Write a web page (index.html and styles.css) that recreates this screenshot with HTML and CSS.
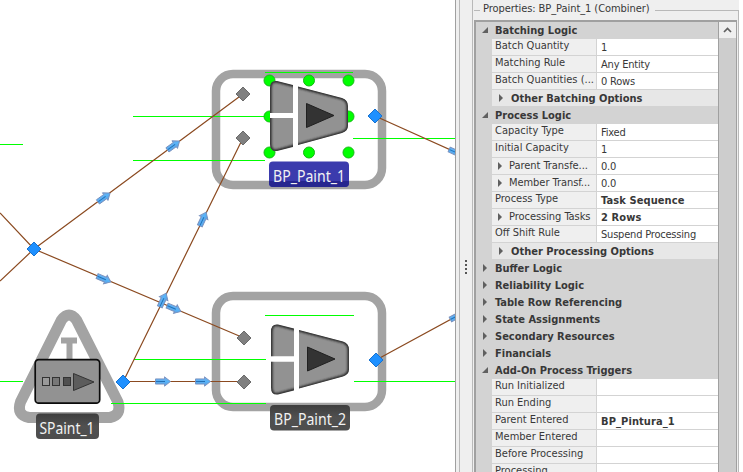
FILE: index.html
```html
<!DOCTYPE html>
<html lang="en">
<head>
<meta charset="utf-8">
<title>Facility model</title>
<link rel="stylesheet" href="styles.css">
</head>
<body>
<main class="app">
<section class="canvas">
<svg width="455" height="472" viewBox="0 0 455 472">
<defs>
<linearGradient id="arrowFill" x1="0" y1="0" x2="0" y2="1"><stop offset="0" stop-color="#78a9e2"/><stop offset=".5" stop-color="#55b4fa"/><stop offset="1" stop-color="#6799d5"/></linearGradient>
<linearGradient id="labelDark" x1="0" y1="0" x2="0" y2="1"><stop offset="0" stop-color="#3d3d3d"/><stop offset=".5" stop-color="#505050"/><stop offset="1" stop-color="#4d4d4d"/></linearGradient>
<filter id="edge" x="-5%" y="-5%" width="110%" height="110%"><feGaussianBlur stdDeviation=".9"/></filter>
<clipPath id="top"><path d="M0 8Q0 0 7 1L23 5V33H0ZM28 6.500L72 18Q78 20 78 26V46Q78 51 72 53L28 65ZM0 38H23V67L7 71Q0 72 0 64Z"/></clipPath>
<g id="arrow"><path d="M-7.500-2.600H1.500V-4.700L7.500 0L1.500 4.700V2.600H-7.500Z" fill="url(#arrowFill)" stroke="#7890bd" stroke-width=".9"/><path d="M-7 0H2" stroke="#246fb5" stroke-width="1"/></g>
<path id="node" d="M0-7L7 0L0 7L-7 0Z"/>
<g id="combiner">
<g clip-path="url(#top)"><path d="M0 8Q0 0 7 1L72 18Q78 20 78 26V46Q78 51 72 53L7 71Q0 72 0 64Z" fill="#929292"/><path d="M0 8Q0 0 7 1L72 18Q78 20 78 26V46Q78 51 72 53L7 71Q0 72 0 64Z" fill="none" stroke="#222" stroke-width="3" filter="url(#edge)"/></g>
<path d="M23 0H28V72H23ZM0 33H23V38H0Z" fill="#fff"/>
<path d="M36.500 23.500L64 35.500L36.500 47.500Z" fill="#333" stroke="#202020"/>
</g>
</defs>
<g fill="none" stroke="#a3a3a3">
<rect x="216" y="74" width="166" height="111" rx="17" stroke-width="8.500"/>
<rect x="216" y="296" width="166" height="111" rx="17" stroke-width="8.500"/>
<path d="M61.500 320Q69 310 76.500 320L118 402Q122 415 110 417.500H29Q16 415 20.500 402Z" stroke-width="11"/>
<path d="M61 340.500H77M69.500 340V360" stroke-width="6"/>
</g>
<g stroke="#00ff00" stroke-width="1">
<path d="M0 144.500H23M133 116.500H270M133 160.500H265M265 72.500H353M353 138.500H455M0 381.500H23M134 359.500H266M111 403.500H266M265 315.500H354M354 381.500H455"/>
</g>
<g stroke="#8b4a20" stroke-width="1.200" fill="none">
<path d="M0 213L34 249L0 281M34 249L243 94M34 249L244 338M123 382L243 138M123 381.500H244M375 116L455 152M376 360L455 317"/>
</g>
<use href="#arrow" transform="translate(104 197.500) rotate(-36)"/>
<use href="#arrow" transform="translate(173.500 145.500) rotate(-36)"/>
<use href="#arrow" transform="translate(104 279) rotate(23)"/>
<use href="#arrow" transform="translate(174 308.500) rotate(23)"/>
<use href="#arrow" transform="translate(163 300) rotate(-65)"/>
<use href="#arrow" transform="translate(203 219) rotate(-65)"/>
<use href="#arrow" transform="translate(163 381.500)"/>
<use href="#arrow" transform="translate(203 381.500)"/>
<use href="#arrow" transform="translate(456 152.500) rotate(24)"/>
<use href="#arrow" transform="translate(457 316) rotate(-28)"/>
<g fill="#808080" stroke="#6b6b6b">
<use href="#node" x="243" y="94"/><use href="#node" x="243" y="138"/><use href="#node" x="244" y="338"/><use href="#node" x="244" y="382"/>
</g>
<g fill="#1e90ff" stroke="#1772d0">
<use href="#node" x="34" y="249"/><use href="#node" x="123" y="382"/><use href="#node" x="375" y="116"/><use href="#node" x="376" y="360"/>
</g>
<g fill="#00ff00" stroke="#17b817">
<circle cx="269.500" cy="80.500" r="5.500"/><circle cx="309" cy="80.500" r="5.500"/><circle cx="348.500" cy="80.500" r="5.500"/>
<circle cx="269.500" cy="116.500" r="5.500"/><circle cx="348.500" cy="116.500" r="5.500"/>
<circle cx="269.500" cy="152.500" r="5.500"/><circle cx="309" cy="152.500" r="5.500"/><circle cx="348.500" cy="152.500" r="5.500"/>
</g>
<use href="#combiner" x="270" y="80"/>
<use href="#combiner" x="271" y="323.500"/>
<rect x="35.200" y="359.700" width="64.500" height="43.500" rx="3.500" fill="#929292" stroke="#0b0b0b" stroke-width="1.700"/>
<g stroke="#333"><rect x="42.500" y="377.500" width="7" height="8" fill="#9a9a9a"/><rect x="52.500" y="377.500" width="7" height="8" fill="#777"/><rect x="63.500" y="377.500" width="7" height="8" fill="#505050"/><path d="M73.500 373.500L94 382L73.500 390.500Z" fill="#5c5c5c"/></g>
<rect x="269" y="161.500" width="80" height="25.500" rx="4" fill="#3b3bad"/>
<path d="M269 181H349V183Q349 187 345 187H273Q269 187 269 183Z" fill="#26268f"/>
<rect x="270" y="405" width="80" height="25.500" rx="4" fill="url(#labelDark)"/>
<rect x="36" y="413.500" width="63" height="25.500" rx="4" fill="url(#labelDark)"/>
<g class="label">
<text x="273" y="181.500" textLength="72" lengthAdjust="spacingAndGlyphs">BP_Paint_1</text>
<text x="274" y="425" textLength="72" lengthAdjust="spacingAndGlyphs">BP_Paint_2</text>
<text x="39.500" y="433.500" textLength="55" lengthAdjust="spacingAndGlyphs">SPaint_1</text>
</g>
</svg>
</section>
<div class="splitter"><i></i><i></i><i></i><i></i></div>
<aside class="panel">
<header class="title"><span class="title-text">Properties: BP_Paint_1 (Combiner)</span></header>
<div class="box">
<div class="grid">
<div class="head open">Batching Logic</div>
<div class="row"><span>Batch Quantity</span><b class="plain">1</b></div>
<div class="row"><span>Matching Rule</span><b class="plain">Any Entity</b></div>
<div class="row"><span>Batch Quantities (...</span><b class="plain">0 Rows</b></div>
<div class="sub">Other Batching Options</div>
<div class="head open">Process Logic</div>
<div class="row"><span>Capacity Type</span><b class="plain">Fixed</b></div>
<div class="row"><span>Initial Capacity</span><b class="plain">1</b></div>
<div class="row"><span class="nested">Parent Transfe...</span><b class="plain">0.0</b></div>
<div class="row"><span class="nested">Member Transf...</span><b class="plain">0.0</b></div>
<div class="row"><span>Process Type</span><b>Task Sequence</b></div>
<div class="row"><span class="nested">Processing Tasks</span><b>2 Rows</b></div>
<div class="row"><span>Off Shift Rule</span><b class="plain">Suspend Processing</b></div>
<div class="sub">Other Processing Options</div>
<div class="head">Buffer Logic</div>
<div class="head">Reliability Logic</div>
<div class="head">Table Row Referencing</div>
<div class="head">State Assignments</div>
<div class="head">Secondary Resources</div>
<div class="head">Financials</div>
<div class="head open">Add-On Process Triggers</div>
<div class="row"><span>Run Initialized</span><b></b></div>
<div class="row"><span>Run Ending</span><b></b></div>
<div class="row"><span>Parent Entered</span><b>BP_Pintura_1</b></div>
<div class="row"><span>Member Entered</span><b></b></div>
<div class="row"><span>Before Processing</span><b></b></div>
<div class="row"><span>Processing</span><b></b></div>
</div>
<div class="scroll"><div class="scroll-up"><svg width="9" height="6" viewBox="0 0 9 6"><path d="M1 5L4.500 1.500L8 5" fill="none" stroke="#606060" stroke-width="1.700"/></svg></div></div>
</div>
</aside>
</main>
</body>
</html>
```
FILE: styles.css
```css
* { box-sizing: border-box; }
body { margin: 0; overflow: hidden; background: #fff; }
.app { display: flex; width: 739px; height: 472px; }
.canvas { width: 455px; background: #fff; }
.canvas svg { display: block; }
.label { font: 16px "Noto Sans", sans-serif; fill: #f2f2f2; }
.splitter {
  display: flex; flex-direction: column; align-items: center; gap: 2px;
  width: 18px; padding: 260px 0 0 4px;
  border-left: 1px solid #a0a0a0; border-right: 1px solid #b9b9b9;
  background: linear-gradient(to right, #efefef 3px, #b9b9b9 3px 4px, #efefef 4px);
}
.splitter i { width: 2px; height: 2px; background: #555; }
.panel {
  display: flex; flex-direction: column; width: 266px; padding-left: 1px;
  background: linear-gradient(#efefef 10px, #b9b9b9 10px) right / 1px 100% no-repeat, #efefef;
  font: 11px/14px "DejaVu Sans Condensed", "DejaVu Sans", sans-serif; font-stretch: condensed; color: #383838;
}
.title { height: 20px; display: flex; align-items: flex-start; padding-top: 2px; }
.title::before, .title::after { content: ""; height: 1px; margin-top: 8px; background: #b9b9b9; }
.title::before { width: 6px; }
.title::after { flex: 1; }
.title-text { padding: 0 6px 0 3px; width: 175px; white-space: nowrap; letter-spacing: -.07px; }
.box { display: flex; flex: 1; min-height: 0; overflow: hidden; width: 263px; border: 2px solid #a0a0a0; border-bottom: 0; border-right-width: 1px; background: #d3d3d3; }
.grid { width: 242px; }
.head, .sub { position: relative; height: 17px; font-weight: bold; white-space: nowrap; }
.head { padding: 2px 0 0 19px; }
.sub { margin-left: 16px; padding: 2px 0 0 19px; height: 16px; margin-bottom: 1px; background: #e7e7e7; }
.head::before, .sub::before, .nested::before {
  content: ""; position: absolute; left: 7px; top: 4px;
  border: solid transparent; border-width: 4px 0 4px 4px; border-left-color: #606060;
}
.head.open::before { left: 6px; top: 5px; border-width: 0 0 6px 6px; border-color: transparent transparent #606060; }
.row { display: flex; height: 17px; margin-left: 16px; border-bottom: 1px solid #d3d3d3; white-space: nowrap; }
.row span { position: relative; width: 105px; padding-left: 3px; background: #efefef; border-right: 1px solid #d3d3d3; }
.row .nested { padding: 1px 0 0 17px; letter-spacing: -.05px; }
.row .nested::before { left: 6px; top: 4px; }
.row b { flex: 1; padding: 2px 0 0 4px; background: #fff; letter-spacing: .1px; }
.row .plain { font-weight: normal; letter-spacing: -.2px; }
.scroll { width: 18px; border-left: 1px solid #a0a0a0; background: #cdcdcd; }
.scroll-up { display: flex; align-items: center; justify-content: center; height: 16px; background: #efefef; }
```
